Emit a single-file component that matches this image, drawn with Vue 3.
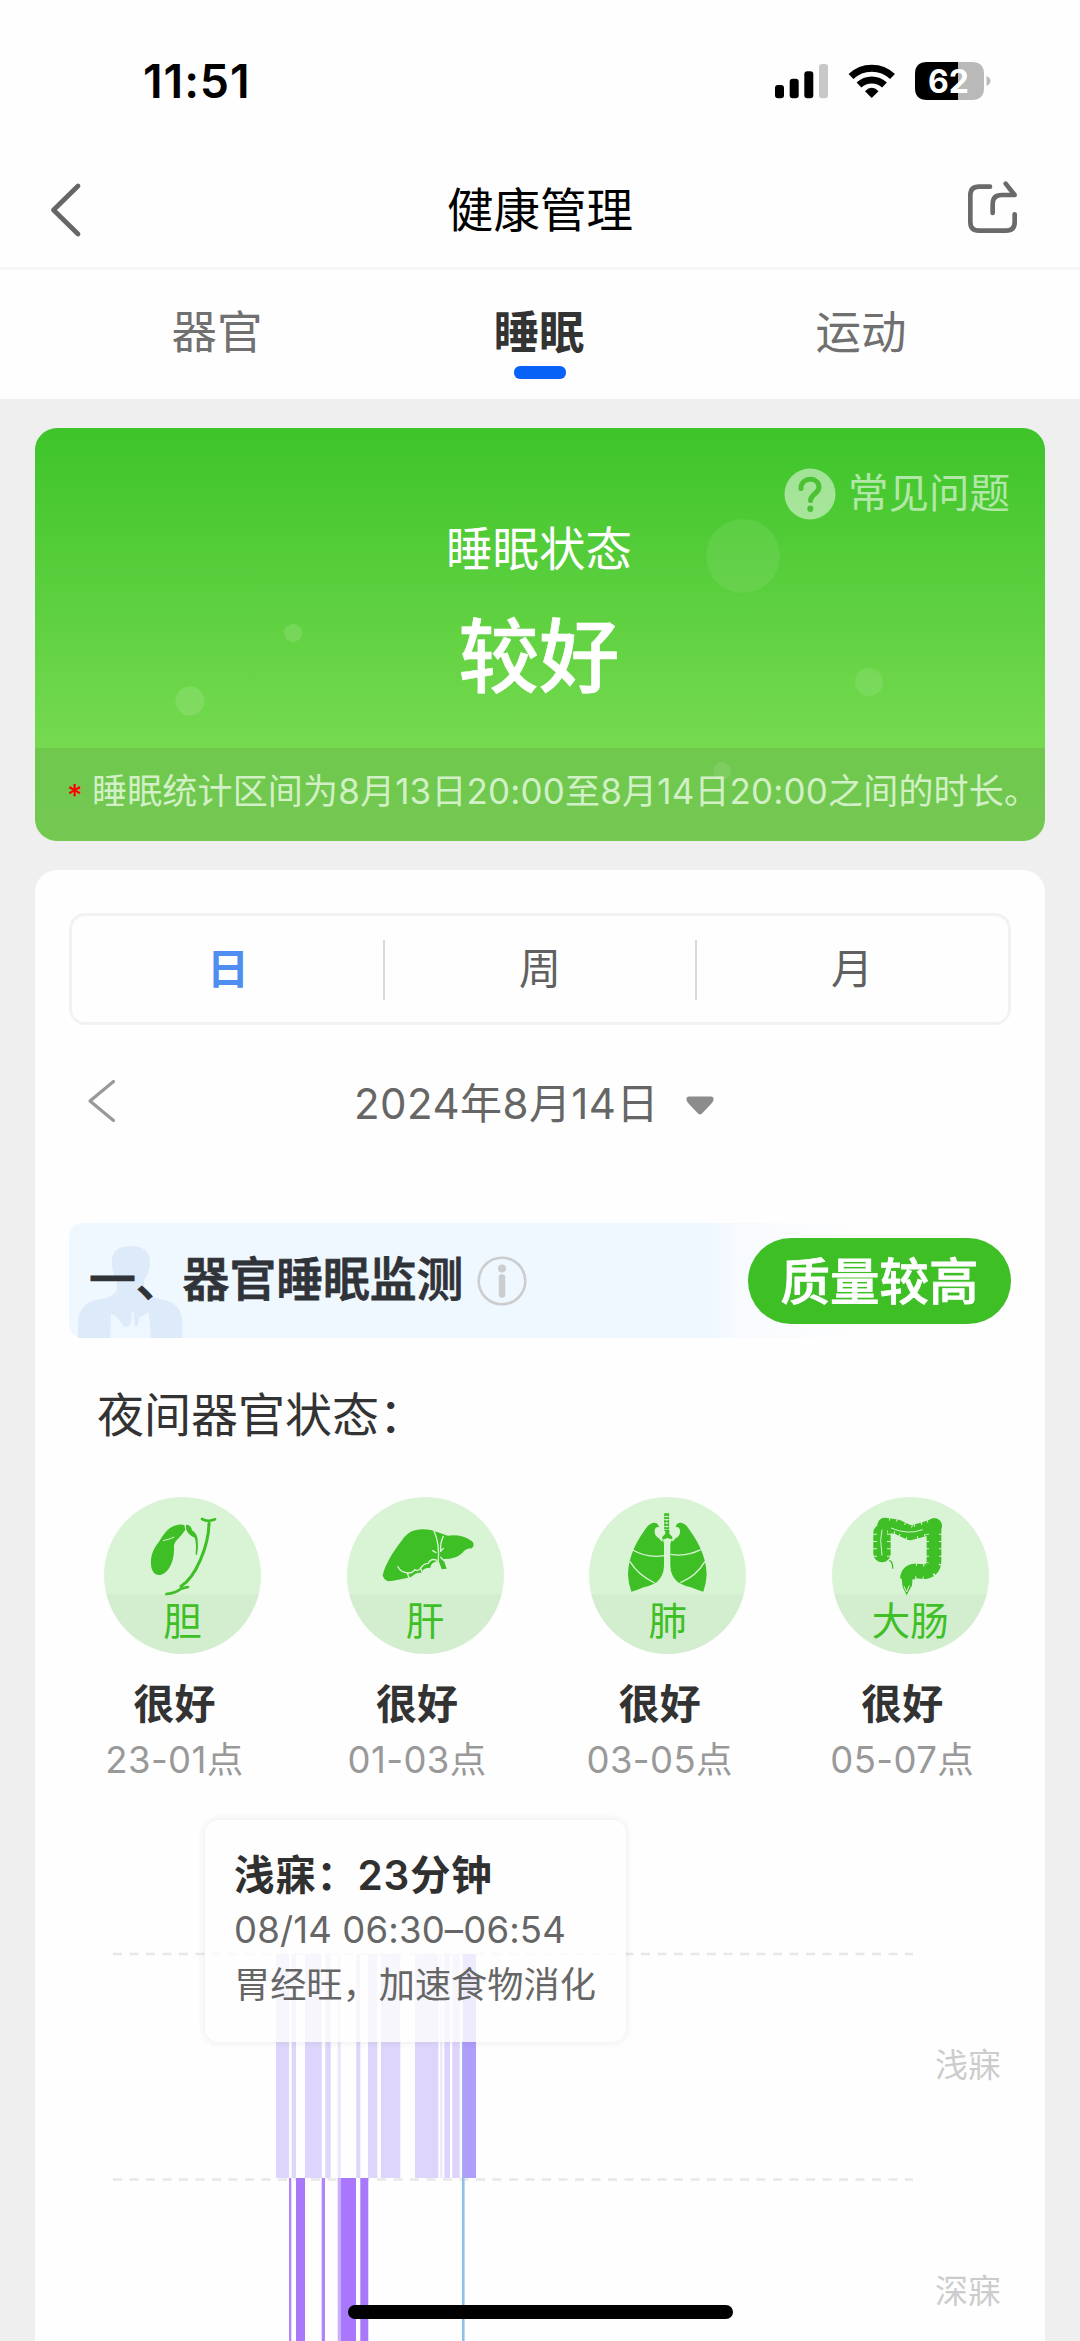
<script setup>
const tabs = [
  { name: '器官', active: false },
  { name: '睡眠', active: true },
  { name: '运动', active: false },
]

const periods = [
  { name: '日', active: true },
  { name: '周', active: false },
  { name: '月', active: false },
]

const organs = [
  { key: 'gall', name: '胆', state: '很好', time: '23-01点', box: '73 50 471 471' },
  { key: 'liver', name: '肝', state: '很好', time: '01-03点', box: '799 50 471 471' },
  { key: 'lung', name: '肺', state: '很好', time: '03-05点', box: '93 50 471 471' },
  { key: 'colon', name: '大肠', state: '很好', time: '05-07点', box: '818 50 471 471' },
]

// [start, end, opacity] along the time axis
const lightSleep = [
  [276, 289, 1], [291.7, 296, 1], [305, 321.7, 1], [325.3, 330.7, 1],
  [337.7, 340.7, 0.6], [356.3, 360.3, 1], [368, 377.3, 1], [381, 400.3, 1],
  [415, 438.3, 1], [440.3, 442.3, 0.6], [444.3, 450, 1], [452.3, 459.7, 1],
]
const deepSleep = [
  [289, 291.3, 0.9], [296, 305, 1], [321.7, 325, 0.9], [337.7, 340.7, 0.6],
  [340.7, 356, 1], [360.3, 368.3, 1],
]
</script>

<template>
  <div class="page">
    <header class="status">
      <span class="clock">11:51</span>
      <svg class="indicators" viewBox="770 55 225 50" width="225" height="50">
        <rect x="775" y="84" width="9" height="13.3" rx="3" />
        <rect x="789.7" y="77.7" width="9" height="19.6" rx="3" />
        <rect x="804.3" y="70.3" width="9" height="27" rx="3" />
        <rect x="819" y="63" width="9" height="34.3" rx="3" fill="#c8c8c8" />
        <g fill="none" stroke="#000" stroke-width="7">
          <path d="M851 75.5A30 30 0 0 1 892.500 75.500" />
          <path d="M859 84A18.500 18.500 0 0 1 884.500 84" />
        </g>
        <path d="M871.700 97L865 90.200Q871.700 83.500 878.500 90.200Z" />
        <path d="M927 61H958V99H927Q915 99 915 87V73Q915 61 927 61Z" />
        <path d="M958 61H972Q984 61 984 73V87Q984 99 972 99H958Z" fill="#b9b9b9" />
        <path d="M986.500 75Q990.500 77 990.500 80T986.500 85Z" fill="#b9b9b9" />
        <text x="948.500" y="92" text-anchor="middle" class="battery">62</text>
      </svg>
    </header>

    <nav class="titlebar">
      <svg width="56" height="60" viewBox="48 179 56 60" fill="none" stroke="#666" stroke-width="4.800" stroke-linecap="round" stroke-linejoin="round">
        <path d="M78 185L53.500 209L78 233" />
      </svg>
      <h1>健康管理</h1>
      <svg width="56" height="60" viewBox="680 422 168 180" fill="none" stroke="#6a6a6a" stroke-width="14" stroke-linecap="round" stroke-linejoin="round">
        <path d="M749 442H716Q690 442 690 468V548Q690 574 716 574H797Q823 574 823 548V525" />
        <path d="M757 521V494Q757 467 784 467H823L796 433" />
      </svg>
    </nav>

    <div class="tabs">
      <div v-for="t in tabs" :key="t.name" class="tab" :class="{ active: t.active }">
        <span>{{ t.name }}</span>
        <i v-if="t.active"></i>
      </div>
    </div>

    <main>
      <section class="hero">
        <svg class="bubbles" viewBox="35 427 1010 414" width="1010" height="414" fill="#fff">
          <circle cx="743" cy="555" r="37" opacity=".08" />
          <circle cx="293" cy="632" r="9" opacity=".13" />
          <circle cx="190" cy="700" r="14.500" opacity=".12" />
          <circle cx="869" cy="681" r="14" opacity=".1" />
          <circle cx="722" cy="770" r="9" opacity=".1" />
        </svg>
        <div class="faq">
          <svg width="52" height="52" viewBox="0 0 52 52">
            <circle cx="26" cy="26" r="25.500" fill="#fff" opacity=".5" />
            <g fill="none" stroke="#4bc233" stroke-width="5" stroke-linecap="round">
              <path d="M17 20.500C17 8.500 35 8.500 35 19C35 26 26.500 26 26.500 32.500" />
              <path d="M26.300 40.500V41" stroke-width="6" />
            </g>
          </svg>
          <span>常见问题</span>
        </div>
        <p class="hero-label">睡眠状态</p>
        <p class="hero-value">较好</p>
        <p class="note"><b>*</b><span>睡眠统计区间为8月13日20:00至8月14日20:00之间的时长。</span></p>
      </section>

      <section class="card">
        <div class="segment">
          <div v-for="p in periods" :key="p.name" class="period" :class="{ active: p.active }">{{ p.name }}</div>
        </div>

        <div class="date">
          <svg class="prev" width="32" height="48" viewBox="86 1077 32 48" fill="none" stroke="#999" stroke-width="3.200" stroke-linecap="round" stroke-linejoin="round">
            <path d="M113.500 1081.500L90 1101L113.500 1120.500" />
          </svg>
          <span>2024年8月14日</span>
          <svg class="caret" width="28" height="20" viewBox="0 0 28 20" fill="#8c8c8c">
            <path d="M3 .5H25Q28 .5 27.500 4Q27 6 25 8L16 17.500Q14 19.500 12 17.500L3 8Q1 6 .5 4Q0 .5 3 .5Z" />
          </svg>
        </div>

        <div class="section-head">
          <svg class="figure" width="105" height="92" viewBox="108 138 294 275" preserveAspectRatio="none">
            <path fill="#dceafa" d="M203 190C200 150 225 138 256 138C290 138 312 155 309 190Q309 210 303 220Q298 234 293 240V270Q300 290 345 298Q400 310 400 370V413H108V370Q108 310 165 298Q210 290 217 270V240Q206 228 203 190Z" />
            <path fill="#eef7ff" d="M200 340Q222 350 234 376Q250 390 258 360V338L264 332L266 375Q275 390 280 352L306 336L312 413H198Z" />
          </svg>
          <h2>一、器官睡眠监测</h2>
          <svg class="info" width="50" height="50" viewBox="0 0 50 50">
            <circle cx="25" cy="25" r="23.300" fill="none" stroke="#cccdcf" stroke-width="2.600" />
            <circle cx="25" cy="12.500" r="4" fill="#cccdcf" />
            <path d="M25 21.500V38.500" stroke="#cccdcf" stroke-width="6.500" stroke-linecap="round" />
          </svg>
          <span class="badge">质量较高</span>
        </div>

        <p class="subhead">夜间器官状态：</p>

        <div class="organs">
          <div v-for="o in organs" :key="o.key" class="organ">
            <div class="disc">
              <svg :viewBox="o.box" width="157" height="157">
                <g v-if="o.key === 'gall'" fill="#3ebf26">
                  <path d="M314 134C300 129 277 135 263 150C251 162 246 173 238 184C222 203 212 225 214 252C216 277 228 287 245 283C268 275 285 242 283 200Q283 185 297 174Q309 160 317 148Z" />
                  <path d="M319 133Q335 133 337 150Q352 159 354 177Q357 200 352 224Q347 225 348 217Q351 190 345 172Q325 164 319 145Z" />
                  <g fill="none" stroke="#3ebf26" stroke-linecap="round" stroke-linejoin="round">
                    <path d="M388 132C386 195 350 290 304 318" stroke-width="9" />
                    <path d="M367 116Q384 126 406 117M388 133L388 124" stroke-width="8" />
                    <path d="M260 341Q288 338 304 325L325 320" stroke-width="8" />
                  </g>
                  <path d="M250 181Q270 177 284 170" fill="none" stroke="#d9f3d5" stroke-width="3" />
                </g>
                <g v-else-if="o.key === 'liver'" fill="#3ebf26">
                  <path d="M906 285C914 250 938 213 963 181C985 148 1013 142 1054 150Q1080 159 1101 166Q1140 160 1172 181Q1185 190 1174 204Q1153 204 1145 218Q1125 237 1088 236L1098 265L1083 267L1074 241Q1050 245 1049 262Q1025 262 1023 278Q1008 274 991 290Q950 300 922 303Q909 298 906 285Z" />
                  <g fill="none" stroke="#d9f3d5" stroke-width="4" stroke-linecap="round" stroke-linejoin="round">
                    <path d="M1060 151Q1077 190 1073 241M1088 168Q1078 188 1080 213L1088 204M1056 211L1066 217M1080 231L1090 241" />
                    <path d="M952 259Q960 276 983 278Q997 278 1002 268Q1012 275 1020 263Q1030 249 1043 249Q1050 232 1069 240M1020 264L1025 278M980 279L985 292" />
                  </g>
                </g>
                <g v-else-if="o.key === 'lung'">
                  <g fill="#3ebf26">
                    <path d="M303 141C300 122 281 124 269 137C240 175 211 225 210 282Q211 311 220 334Q237 330 257 321Q285 314 298 304Q317 286 318 257V190Q316 176 304 174Q288 168 290 149Q293 137 303 141Z" />
                    <path d="M353 141C356 122 375 124 386 137C415 175 445 225 446 282Q445 311 436 334Q419 330 399 321Q371 314 358 304Q338 286 337 257V190Q340 176 352 174Q368 168 366 149Q363 137 353 141Z" />
                    <path d="M312 171L322 160V148H334V160L344 171L340 177L328 173L315 178Z" />
                  </g>
                  <path d="M326 99V152" stroke="#3ebf26" stroke-width="15" stroke-dasharray="8 2" />
                  <path d="M326 106V146" stroke="#d9f3d5" stroke-width="5" stroke-dasharray="5 5" />
                  <g fill="none" stroke="#d9f3d5" stroke-width="4">
                    <path d="M224 209Q268 234 318 226M216 244Q240 284 290 308M338 222Q385 230 428 208M441 243Q415 287 367 307" />
                    <path d="M300 144Q292 160 312 182M355 144Q364 160 343 182" />
                  </g>
                </g>
                <g v-else fill="none" stroke-linejoin="round">
                  <g stroke="#3ebf26" stroke-width="44">
                    <path d="M968 158V220" stroke-linecap="round" stroke-width="52" />
                    <path d="M976 134L1012 139L1052 158L1098 146L1126 136" stroke-linecap="round" />
                    <path d="M1124 136V240Q1124 270 1098 274L1066 272" stroke-linecap="round" />
                    <path d="M1068 272Q1046 272 1044 296" />
                  </g>
                  <path d="M1026 288H1060L1058 315L1042 345L1030 320Z" fill="#3ebf26" />
                  <g stroke="#d9f3d5" stroke-width="54" stroke-dasharray="3 19">
                    <path d="M968 160V236" />
                    <path d="M986 134L1012 139L1052 158L1098 146L1120 136" />
                    <path d="M1124 160V240Q1124 272 1098 274L1056 272" />
                  </g>
                  <g stroke="#3ebf26" stroke-width="30">
                    <path d="M968 150V230" />
                    <path d="M976 134L1012 139L1052 158L1098 146L1124 136V240Q1124 270 1098 274L1066 272" />
                  </g>
                  <path d="M968 148L964 180L968 226M995 143Q1045 165 1090 148M1034 318L1042 335L1050 315" stroke="#d9f3d5" stroke-width="3" />
                  <path d="M990 240Q1001 244 1000 265" stroke="#3ebf26" stroke-width="4" />
                </g>
              </svg>
              <span>{{ o.name }}</span>
            </div>
            <div class="organ-text">
              <strong>{{ o.state }}</strong>
              <small>{{ o.time }}</small>
            </div>
          </div>
        </div>

        <div class="chart">
          <svg viewBox="35 1800 1010 541" width="1010" height="541">
            <g stroke="#e8e8e8" stroke-width="2.400" stroke-dasharray="9 7.500">
              <path d="M113 1954H913M113 2179.500H913" />
            </g>
            <rect v-for="b in lightSleep" :key="b[0]" :x="b[0]" y="1954" :width="b[1] - b[0]" height="224" fill="#ddd5fb" :opacity="b[2]" />
            <rect v-for="b in deepSleep" :key="b[0]" :x="b[0]" y="2178" :width="b[1] - b[0]" height="163" fill="#a877fb" :opacity="b[2]" />
            <rect x="462" y="2042" width="2.600" height="299" fill="#8fc0e9" />
            <rect x="462.700" y="1954" width="13.300" height="224" fill="#b09efc" />
          </svg>
          <span class="axis light">浅寐</span>
          <span class="axis deep">深寐</span>
          <div class="tooltip">
            <strong>浅寐：23分钟</strong>
            <span class="range">08/14 06:30–06:54</span>
            <span class="tip">胃经旺，加速食物消化</span>
          </div>
        </div>
      </section>
    </main>
    <div class="home"></div>
  </div>
</template>

<style>
body {
  margin: 0;
  background: #fff;
}
</style>

<style scoped>
.page {
  position: relative;
  display: flex;
  flex-direction: column;
  width: 1080px;
  height: 2341px;
  overflow: hidden;
  background: #fefefe;
  font-family: Inter, "Noto Sans CJK SC", sans-serif;
  color: #333;
  white-space: nowrap;
}
.page * {
  box-sizing: border-box;
}
p, h1, h2 {
  margin: 0;
  font-weight: 400;
}
svg {
  display: block;
  flex: none;
}
.status {
  display: flex;
  justify-content: space-between;
  align-items: center;
  height: 161px;
  padding: 0 85px 0 143px;
}
.clock {
  font-size: 46.5px;
  font-weight: 600;
  color: #000;
  letter-spacing: 0.9px;
  line-height: 60px;
}
.battery {
  font: 700 32px Inter, sans-serif;
  fill: #fff;
}
.titlebar {
  display: flex;
  justify-content: space-between;
  align-items: center;
  height: 109px;
  padding: 0 57px 9px 48px;
  border-bottom: 3px solid #f7f7f7;
}
.titlebar h1 {
  padding-right: 0;
  margin-left: 9px;
  font-size: 46.5px;
  line-height: 60px;
  color: #000;
}
.tabs {
  display: flex;
  height: 129px;
  padding: 0 57px;
}
.tab {
  display: flex;
  flex-direction: column;
  align-items: center;
  flex: 1;
  padding-top: 33px;
  font-size: 45.5px;
  line-height: 60px;
  color: #707070;
}
.tab span {
  margin-left: -2px;
}
.tab.active {
  color: #333;
  font-weight: 600;
}
.tab i {
  width: 52px;
  height: 13px;
  margin-top: 3px;
  border-radius: 6px;
  background: #0862f5;
}
main {
  display: flex;
  flex-direction: column;
  gap: 29px;
  flex: 1;
  padding: 29px 35px 0;
  background: #efefef;
}
.hero {
  position: relative;
  display: flex;
  flex-direction: column;
  align-items: center;
  height: 413px;
  flex: none;
  border-radius: 22px;
  overflow: hidden;
  color: #fff;
  background: linear-gradient(#3ec42a, #76da50 78%, #7bdc57);
}
.bubbles {
  position: absolute;
  inset: 0;
}
.faq {
  display: flex;
  align-items: center;
  gap: 12px;
  align-self: flex-end;
  margin: 40px 35px 0 0;
  font-size: 40.5px;
  line-height: 52px;
  color: #b2e7a8;
}
.hero-label {
  margin: -1px 0 0 -2px;
  font-size: 46.5px;
  line-height: 60px;
}
.hero-value {
  margin: 18px 0 0 -2px;
  font-size: 80.5px;
  line-height: 120px;
  font-weight: 500;
  -webkit-text-stroke: 0.6px #fff;
}
.note {
  display: flex;
  align-items: center;
  width: 100%;
  height: 93px;
  margin-top: auto;
  padding: 0 0 12px 32px;
  background: rgba(95, 150, 70, 0.27);
  font-size: 35px;
  letter-spacing: 0.17px;
  color: #d2f0c6;
}
.note b {
  width: 25px;
  font-weight: 500;
  color: #f00;
  font-size: 30px;
  line-height: 30px;
  padding-top: 13px;
}
.card {
  display: flex;
  flex-direction: column;
  flex: 1;
  padding-top: 43px;
  border-radius: 22px 22px 0 0;
  background: #fefefe;
}
.segment {
  display: flex;
  height: 112px;
  margin: 0 34px;
  border: 3px solid #f2f2f2;
  border-radius: 16px;
}
.period {
  display: flex;
  align-items: center;
  justify-content: center;
  position: relative;
  flex: 1;
  padding-bottom: 8px;
  font-size: 42px;
  color: #606060;
}
.period + .period::before {
  content: "";
  position: absolute;
  left: -1px;
  top: 24px;
  width: 2px;
  height: 60px;
  background: #dadada;
}
.period.active {
  color: #4f8ef0;
  font-weight: 600;
}
.date {
  display: flex;
  align-items: center;
  height: 60px;
  margin: 49px 0 0 51px;
  font-size: 42px;
  color: #666;
}
.date span {
  margin: -7px 27px 0 236px;
  letter-spacing: 0.45px;
}
.date .prev {
  margin-top: -6px;
}
.date .caret {
  margin-top: 4px;
}
.section-head {
  position: relative;
  display: flex;
  align-items: center;
  height: 115px;
  margin: 89px 34px 0;
  padding-left: 20px;
  border-radius: 14px;
  background: linear-gradient(90deg, #eff7ff 68%, #f7fafe 71%, #fefefe 84%);
}
.figure {
  position: absolute;
  left: 9px;
  bottom: 0;
}
.section-head h2 {
  position: relative;
  margin-top: -4px;
  font-size: 46.8px;
  font-weight: 500;
  line-height: 60px;
  color: #303338;
  -webkit-text-stroke: 0.9px #303338;
}
.info {
  margin-left: 14px;
}
.badge {
  display: flex;
  align-items: center;
  justify-content: center;
  width: 263px;
  height: 86px;
  margin-left: auto;
  padding-bottom: 5px;
  border-radius: 43px;
  background: #3ebf26;
  color: #fff;
  font-size: 49.5px;
  font-weight: 500;
  -webkit-text-stroke: 0.8px #fff;
}
.subhead {
  margin: 47px 0 0 62px;
  font-size: 47px;
  line-height: 60px;
}
.organs {
  display: flex;
  margin: 52px 0 0 26px;
}
.organ {
  width: 242.6px;
  padding-left: 43px;
}
.disc {
  position: relative;
  width: 157px;
  height: 157px;
  border-radius: 50%;
  background: linear-gradient(#d9f3d5 61.5%, #d3edcf 62.5%);
}
.disc span {
  position: absolute;
  left: 0;
  right: 0;
  bottom: 8px;
  text-align: center;
  font-size: 38.5px;
  line-height: 50px;
  color: #3ebf26;
}
.organ-text {
  display: flex;
  flex-direction: column;
  align-items: center;
  width: 141px;
}
.organ-text strong {
  margin-top: 24px;
  font-size: 41px;
  font-weight: 600;
  line-height: 52px;
}
.organ-text small {
  margin-top: 5px;
  font-size: 36.5px;
  letter-spacing: 0.4px;
  line-height: 50px;
  color: #999;
}
.chart {
  position: relative;
  margin-top: 15px;
}
.chart > svg {
  width: 1010px;
}
.axis {
  position: absolute;
  left: 900px;
  font-size: 33px;
  line-height: 44px;
  color: #ccc;
}
.axis.light {
  top: 243px;
}
.axis.deep {
  top: 469px;
}
.tooltip {
  position: absolute;
  left: 170px;
  top: 20px;
  display: flex;
  flex-direction: column;
  width: 421px;
  height: 222px;
  padding: 28px 0 0 29px;
  border-radius: 14px;
  background: rgba(254, 254, 254, 0.8);
  box-shadow: 0 0 8px rgba(0, 0, 0, 0.09);
  color: #666;
}
.tooltip strong {
  font-size: 40.5px;
  font-weight: 600;
  letter-spacing: 0.7px;
  line-height: 56px;
  color: #303030;
}
.range {
  font-size: 36.5px;
  letter-spacing: 0.15px;
  line-height: 53px;
}
.tip {
  font-size: 36.2px;
  line-height: 57px;
}
.home {
  position: absolute;
  left: 348px;
  top: 2305px;
  width: 385px;
  height: 14px;
  border-radius: 7px;
  background: #000;
}
</style>
